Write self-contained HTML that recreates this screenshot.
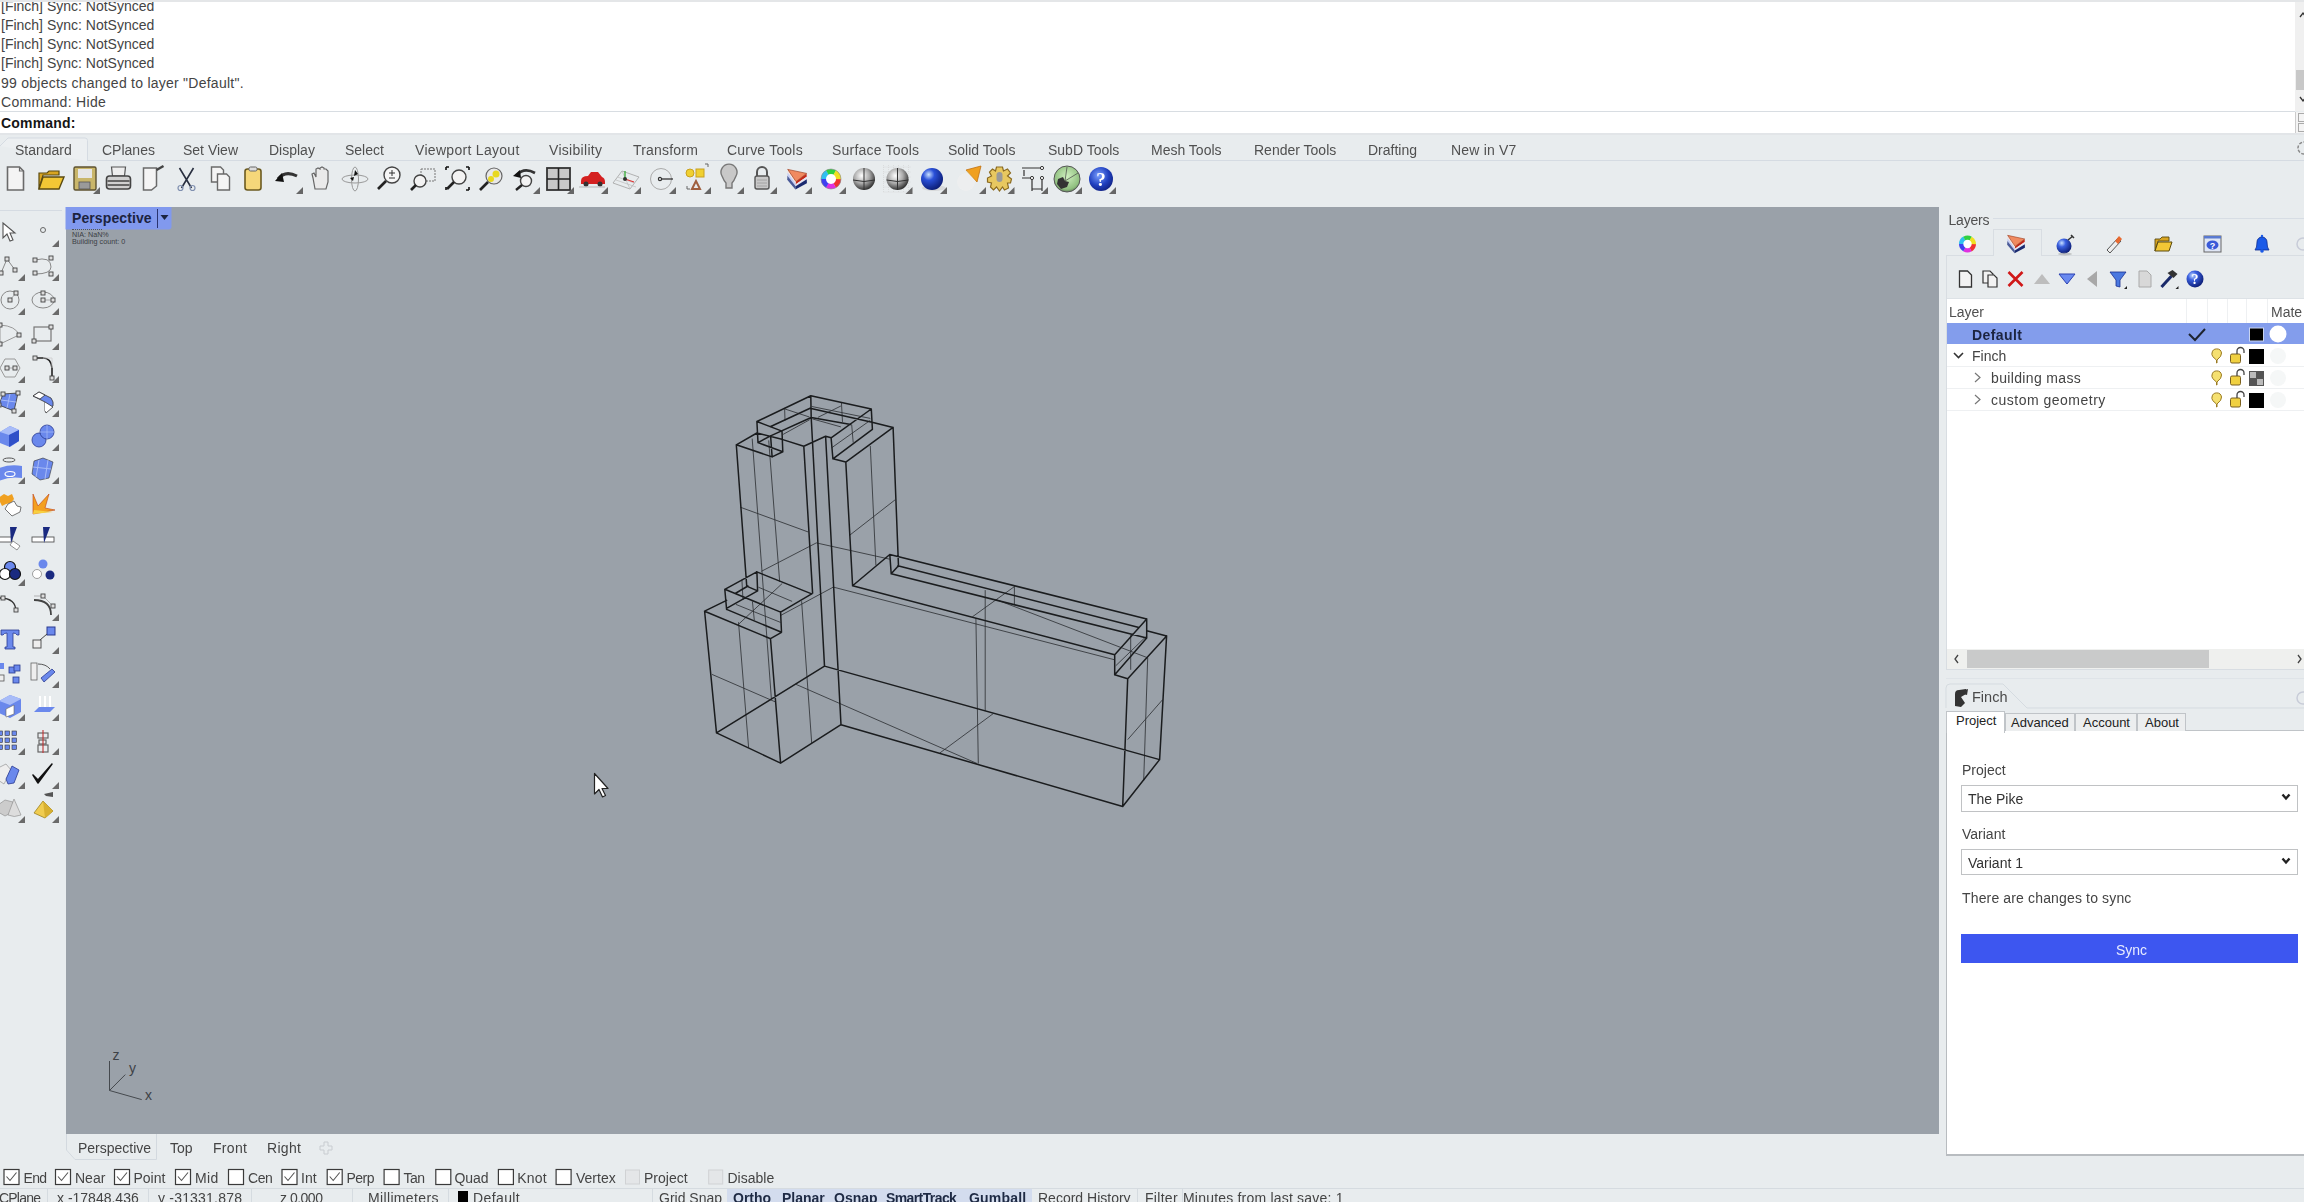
<!DOCTYPE html>
<html><head><meta charset="utf-8">
<style>
*{margin:0;padding:0;box-sizing:border-box}
html,body{width:2304px;height:1202px;overflow:hidden;background:#e8ecee;font-family:"Liberation Sans",sans-serif;font-size:14px;color:#3c3c3c;position:relative}
.a{position:absolute;white-space:nowrap}
#topstrip{left:0;top:0;width:2304px;height:2px;background:#e4e6e8}
#hist{left:0;top:2px;width:2295px;height:109px;background:#fff;overflow:hidden}
#hist div{position:absolute;left:1px;font-size:14px;color:#444;line-height:19px}
#vscroll{left:2295px;top:2px;width:9px;height:109px;background:#f0f0f0}
#cmd{left:0;top:111px;width:2295px;height:22px;background:#fff;border-top:1px solid #d8dde2}
.t{position:absolute;top:142px;font-size:14px;color:#505050}
#vp{left:66px;top:207px;width:1873px;height:927px;background:#9aa1a9}
.lbl{font-size:14px;color:#444}
#wrap{position:absolute;left:0;top:0;width:2304px;height:1202px;filter:blur(0.45px)}
</style></head><body><div id="wrap">
<div class="a" id="topstrip"></div>
<div class="a" id="hist">
<div style="top:-5px">[Finch] Sync: NotSynced</div>
<div style="top:14px">[Finch] Sync: NotSynced</div>
<div style="top:33px">[Finch] Sync: NotSynced</div>
<div style="top:52px">[Finch] Sync: NotSynced</div>
<div style="top:72px;letter-spacing:0.25px">99 objects changed to layer "Default".</div>
<div style="top:91px;letter-spacing:0.3px">Command: Hide</div>
</div>
<div class="a" id="vscroll"><div class="a" style="left:1px;top:68px;width:8px;height:20px;background:#c8c8c8"></div></div>
<div class="a" style="left:2295px;top:112px;width:9px;height:21px;background:#f4f4f4;border-left:1px solid #ccc"></div>
<div class="a" id="cmd"><span class="a" style="left:1px;top:3px;font-weight:bold;color:#151515;letter-spacing:0.2px">Command:</span></div>
<!-- tab row -->
<div class="a" style="left:88px;top:160px;width:2216px;height:1px;background:#d5dbe2"></div>
<div class="a" style="left:0;top:133px;width:2304px;height:2px;background:#e2e5e8"></div><svg class="a" style="left:0;top:135px" width="92" height="28" viewBox="0 135 92 28"><path d="M0 146L8 138H85Q87.5 138 87.5 140.5V161" fill="#eceff1" stroke="#d5dbe2" stroke-width="1"/></svg>
<span class="t" style="left:15px">Standard</span>
<span class="t" style="left:102px">CPlanes</span>
<span class="t" style="left:183px">Set View</span>
<span class="t" style="left:269px">Display</span>
<span class="t" style="left:345px">Select</span>
<span class="t" style="left:415px;letter-spacing:0.3px">Viewport Layout</span>
<span class="t" style="left:549px;letter-spacing:0.3px">Visibility</span>
<span class="t" style="left:633px;letter-spacing:0.2px">Transform</span>
<span class="t" style="left:727px;letter-spacing:0.2px">Curve Tools</span>
<span class="t" style="left:832px;letter-spacing:0.2px">Surface Tools</span>
<span class="t" style="left:948px">Solid Tools</span>
<span class="t" style="left:1048px">SubD Tools</span>
<span class="t" style="left:1151px">Mesh Tools</span>
<span class="t" style="left:1254px">Render Tools</span>
<span class="t" style="left:1368px">Drafting</span>
<span class="t" style="left:1451px;letter-spacing:0.2px">New in V7</span>
<svg class="a" style="left:2288px;top:0" width="16" height="240" viewBox="2288 0 16 240"><path d="M2300 17L2303 13L2306 17M2300 97L2303 101L2306 97" fill="none" stroke="#333" stroke-width="1.3"/><rect x="2298.5" y="113.5" width="8" height="8" fill="#f4f4f4" stroke="#aaa" stroke-width="1"/><rect x="2298.5" y="123.5" width="8" height="8" fill="#f4f4f4" stroke="#aaa" stroke-width="1"/><circle cx="2304" cy="148" r="6" fill="none" stroke="#888" stroke-width="1.5" stroke-dasharray="3 1.5"/></svg>
<svg class="a" style="left:0;top:155px" width="1130" height="48" viewBox="0 155 1130 48"><defs><radialGradient id="gs" cx="0.4" cy="0.35" r="0.7"><stop offset="0" stop-color="#fff"/><stop offset="0.5" stop-color="#aaa"/><stop offset="1" stop-color="#222"/></radialGradient><radialGradient id="bs" cx="0.35" cy="0.3" r="0.75"><stop offset="0" stop-color="#c8e0ff"/><stop offset="0.35" stop-color="#2a50d8"/><stop offset="1" stop-color="#0a1a70"/></radialGradient><radialGradient id="gl" cx="0.5" cy="0.4" r="0.7"><stop offset="0" stop-color="#d0f0c0"/><stop offset="0.7" stop-color="#90c080"/><stop offset="1" stop-color="#405040"/></radialGradient><radialGradient id="hs" cx="0.4" cy="0.35" r="0.7"><stop offset="0" stop-color="#7aa0ff"/><stop offset="0.6" stop-color="#2040c0"/><stop offset="1" stop-color="#102080"/></radialGradient></defs><g transform="translate(15.5,179)"><path d="M-8 -12H4L8 -8V11H-8Z" fill="#f4f4f4" stroke="#6a6a6a" stroke-width="1.6"/><path d="M4 -12V-8H8" fill="none" stroke="#6a6a6a" stroke-width="1.2"/></g><g transform="translate(51,179)"><path d="M-12 -6H-4L-2 -8H8V-4H-8L-12 10Z" fill="#d9a520" stroke="#5a4a10" stroke-width="1.2"/><path d="M-8 -2H13L8 10H-12Z" fill="#f2c735" stroke="#5a4a10" stroke-width="1.4"/></g><g transform="translate(85,179)"><rect x="-11" y="-12" width="22" height="23" rx="1.5" fill="#c9b66a" stroke="#5d5230" stroke-width="1.4"/><rect x="-7" y="-10" width="14" height="9" fill="#e6e6e6"/><rect x="-6" y="3" width="11" height="7" fill="#9a9a9a" stroke="#555" stroke-width="0.8"/></g><path d="M100 187L100 194L93 194Z" fill="#666"/><g transform="translate(118.5,179)"><path d="M-7 -12H7L6 -3H-6Z" fill="#eee" stroke="#555" stroke-width="1.2"/><rect x="-12" y="-3" width="24" height="13" rx="3" fill="#d0d0d0" stroke="#444" stroke-width="1.6"/><path d="M-11 2H11M-11 6H11" stroke="#444" stroke-width="1.3"/></g><g transform="translate(154.5,179)"><path d="M-11 -11H2V7L-3 11H-11Z" fill="#f4f4f4" stroke="#6a6a6a" stroke-width="1.5"/><path d="M2 -9L9 -13" stroke="#444" stroke-width="2.5"/></g><g transform="translate(186.5,179)"><path d="M-7 -11L5 9M7 -11L-5 9" stroke="#2a3040" stroke-width="1.6"/><circle cx="-6" cy="9" r="2.5" fill="none" stroke="#8090b0" stroke-width="1.2"/><circle cx="6" cy="9" r="2.5" fill="none" stroke="#8090b0" stroke-width="1.2"/></g><g transform="translate(220.5,179)"><path d="M-9 -12H0L3 -9V3H-9Z" fill="#f4f4f4" stroke="#6a6a6a" stroke-width="1.4"/><path d="M-3 -5H6L9 -2V11H-3Z" fill="#f4f4f4" stroke="#6a6a6a" stroke-width="1.4"/></g><g transform="translate(253,179)"><rect x="-8" y="-10" width="16" height="21" rx="2.5" fill="#f5d77a" stroke="#6b5a20" stroke-width="1.6"/><rect x="-4" y="-12" width="8" height="4" rx="1.5" fill="#ddd" stroke="#666" stroke-width="1"/></g><g transform="translate(288,179)"><path d="M-10 0Q-3 -9 9 -3" fill="none" stroke="#333" stroke-width="3"/><path d="M-13 2L-6 -6L-4 3Z" fill="#111"/></g><path d="M303 187L303 194L296 194Z" fill="#666"/><g transform="translate(321,179)"><path d="M-6 10L-8 -1L-9 -5L-7 -6L-5 -2L-5 -10L-3 -11L-1 -10V-11L1 -12L3 -11V-10L5 -10L7 -8V3L5 10Z" fill="#eaeaea" stroke="#666" stroke-width="1.2"/></g><g transform="translate(355,179)"><ellipse cx="0" cy="0" rx="13" ry="4" fill="none" stroke="#999" stroke-width="1"/><ellipse cx="0" cy="0" rx="3.5" ry="12" fill="none" stroke="#999" stroke-width="1"/><path d="M3 -5L0 -9L-1 -3Z M-5 -1L-2 2L-1 -2Z" fill="#111"/></g><g transform="translate(389,179)"><circle cx="3" cy="-4" r="8" fill="#f6f6f6" stroke="#444" stroke-width="1.4"/><path d="M-3 2L-11 10" stroke="#222" stroke-width="2.6"/><path d="M0 -6H6M3 -9V-3M0 -1H6" stroke="#333" stroke-width="1"/></g><g transform="translate(423,179)"><rect x="-2" y="-10" width="14" height="12" fill="none" stroke="#777" stroke-width="1" stroke-dasharray="2 1"/><circle cx="-3" cy="2" r="6" fill="#f3f3f3" stroke="#444" stroke-width="1.4"/><path d="M-7 6L-12 11" stroke="#222" stroke-width="2.6"/></g><g transform="translate(457,179)"><circle cx="2" cy="-2" r="7" fill="#f3f3f3" stroke="#444" stroke-width="1.4"/><path d="M-3 3L-10 10" stroke="#222" stroke-width="2.6"/><path d="M-11 -12H-8M-11 -12V-9M12 -12H9M12 -12V-9M12 11H9M12 11V8M-11 11V8" stroke="#111" stroke-width="1.6"/></g><g transform="translate(491,179)"><circle cx="3" cy="-3" r="8" fill="#e8e8e8" stroke="#666" stroke-width="1.2"/><circle cx="5" cy="-5" r="3.5" fill="#e8d820"/><circle cx="0" cy="0" r="3" fill="#e8d820"/><path d="M-3 3L-11 11" stroke="#222" stroke-width="2.6"/></g><g transform="translate(525,179)"><circle cx="1" cy="2" r="5.5" fill="#f3f3f3" stroke="#444" stroke-width="1.4"/><path d="M-3 6L-9 11" stroke="#222" stroke-width="2.4"/><path d="M-8 -4Q-1 -12 10 -6" fill="none" stroke="#333" stroke-width="2.6"/><path d="M-12 -3L-5 -9L-4 -1Z" fill="#111"/></g><path d="M540 187L540 194L533 194Z" fill="#666"/><g transform="translate(559,179)"><rect x="-12" y="-11" width="23" height="22" fill="#c8c8c8" stroke="#333" stroke-width="1.8"/><path d="M-0.5 -11V11M-12 0H11" stroke="#222" stroke-width="1.6"/></g><path d="M574 187L574 194L567 194Z" fill="#666"/><g transform="translate(593,179)"><path d="M-12 2Q-12 -3 -5 -3L-2 -7H5L9 -2Q12 -1 12 3V5H-12Z" fill="#d42020"/><circle cx="-7" cy="5" r="2.5" fill="#333"/><circle cx="7" cy="5" r="2.5" fill="#333"/><path d="M-14 8H12" stroke="#aaa" stroke-width="0.8"/></g><path d="M608 187L608 194L601 194Z" fill="#666"/><g transform="translate(626,179)"><path d="M-13 4L-4 -8L13 -2L4 10Z" fill="none" stroke="#aaa" stroke-width="0.9"/><path d="M-8.5 -2L8.5 4M-4 -8L4 10M-10 1L10 8" stroke="#bbb" stroke-width="0.7"/><path d="M-1 0L-1 -8" stroke="#3a3" stroke-width="1.3"/><path d="M-1 0L8 3" stroke="#d33" stroke-width="1.3"/><circle cx="-1" cy="0" r="2" fill="#333"/></g><path d="M641 187L641 194L634 194Z" fill="#666"/><g transform="translate(661,179)"><circle cx="0" cy="0" r="10.5" fill="none" stroke="#aaa" stroke-width="1"/><circle cx="-1" cy="0" r="1.6" fill="none" stroke="#333" stroke-width="1.2"/><path d="M0 0H12" stroke="#333" stroke-width="1.3"/></g><path d="M676 187L676 194L669 194Z" fill="#666"/><g transform="translate(696,179)"><circle cx="-6" cy="-6" r="4" fill="#f0d030" stroke="#c8a020" stroke-width="1"/><rect x="0" y="-10" width="8" height="8" fill="#f0d030" stroke="#c8a020" stroke-width="1"/><path d="M-4 10L0 2L4 10Z" fill="none" stroke="#a06040" stroke-width="2"/><path d="M9 -15H12V-12M-9 7V10H-6" stroke="#666" stroke-width="1" fill="none"/></g><path d="M711 187L711 194L704 194Z" fill="#666"/><g transform="translate(729,179)"><path d="M-7 -3A8 8 0 1 1 7 -3Q5 2 3 4V9H-3V4Q-5 2 -7 -3Z" fill="#c8c8c8" stroke="#777" stroke-width="1.4"/></g><path d="M744 187L744 194L737 194Z" fill="#666"/><g transform="translate(762,179)"><path d="M-5 -3V-7A5 5 0 0 1 5 -7V-3" fill="none" stroke="#555" stroke-width="2"/><rect x="-7" y="-3" width="14" height="13" rx="2" fill="#c8c8c8" stroke="#555" stroke-width="1.4"/><path d="M-5 1H5M-5 4H5M-5 7H5" stroke="#999" stroke-width="0.8"/></g><path d="M777 187L777 194L770 194Z" fill="#666"/><g transform="translate(797,179)"><path d="M-9.3 -9.6L-1 2.6L-1.18 4.94L-9.45 -6.48Z" fill="#f4e4e0"/><path d="M-9.45 -6.48L-1.18 4.94L-1.36 7.28L-9.6 -3.36Z" fill="#c4ccf4"/><path d="M-9.6 -3.36L-1.36 7.28L-1.6 10.4L-9.8 0.8Z" fill="#4a5a98"/><path d="M-1 2.6L9.6 -5.6L9.7 -2.17L-1.21 5.33Z" fill="#c42818"/><path d="M-1.21 5.33L9.7 -2.17L9.78 0.28L-1.36 7.28Z" fill="#e8e4f0"/><path d="M-1.36 7.28L9.78 0.28L9.9 4.2L-1.6 10.4Z" fill="#1a2a70"/><path d="M-9.3 -9.6L9.6 -5.6L-1 2.6Z" fill="#f08a60" stroke="#a04020" stroke-width="0.7"/></g><path d="M812 187L812 194L805 194Z" fill="#666"/><g transform="translate(831,179)"><path d="M0 0L10.00 0.00A10 10 0 0 1 4.85 8.75Z" fill="#f03030"/><path d="M0 0L5.00 8.66A10 10 0 0 1 -5.15 8.57Z" fill="#e030e0"/><path d="M0 0L-5.00 8.66A10 10 0 0 1 -10.00 -0.17Z" fill="#4040f0"/><path d="M0 0L-10.00 0.00A10 10 0 0 1 -4.85 -8.75Z" fill="#30c0f0"/><path d="M0 0L-5.00 -8.66A10 10 0 0 1 5.15 -8.57Z" fill="#30d040"/><path d="M0 0L5.00 -8.66A10 10 0 0 1 10.00 0.17Z" fill="#f0e020"/><circle cx="0" cy="0" r="5" fill="#fff"/><circle cx="0" cy="0" r="10" fill="none" stroke="#888" stroke-width="0.6"/></g><path d="M846 187L846 194L839 194Z" fill="#666"/><g transform="translate(864,179)"><circle r="11" fill="url(#gs)"/><path d="M0 -11V11M-11 1Q0 4 11 1" stroke="#333" stroke-width="1" fill="none"/></g><g transform="translate(897.5,179)"><path d="M-14 -14V14M-9 -14V14M-4 -14V14M1 -14V14M6 -14V14M11 -14V14M-14 -12H14M-14 -7H14M-14 -2H14M-14 3H14M-14 8H14M-14 13H14" stroke="#ccc" stroke-width="0.5" stroke-dasharray="1 1"/><circle r="11" fill="url(#gs)"/><path d="M0 -11V11M-11 1Q0 4 11 1" stroke="#333" stroke-width="1" fill="none"/></g><path d="M912.5 187L912.5 194L905.5 194Z" fill="#666"/><g transform="translate(932,179)"><ellipse cx="2" cy="9" rx="12" ry="3" fill="#ccc" opacity="0.6"/><circle r="11" fill="url(#bs)"/></g><path d="M947 187L947 194L940 194Z" fill="#666"/><g transform="translate(971,179)"><circle cx="-5" cy="3" r="9" fill="#f0f0f0" opacity="0.7"/><path d="M-5 -9L10 -13L6 3Z" fill="#f0a020" stroke="#c07010" stroke-width="0.8"/><path d="M-5 -9L6 3L-3 -6Z" fill="#f6e090"/></g><path d="M986 187L986 194L979 194Z" fill="#666"/><g transform="translate(999.5,179)"><path d="M-3 -12H3L4 -8L8 -10L11 -6L8 -3L12 0L11 4L8 4L9 9L5 11L3 8L0 12L-3 8L-6 11L-9 8L-8 4L-12 3L-12 -1L-8 -3L-10 -7L-7 -10L-4 -8Z" fill="#e8c860" stroke="#8a6a20" stroke-width="1.2"/><rect x="-3" y="-7" width="6" height="10" rx="3" fill="#999"/></g><path d="M1014.5 187L1014.5 194L1007.5 194Z" fill="#666"/><g transform="translate(1033,179)"><path d="M-11 -11H9M-11 -1H-1V12M9 -1V12M-9 -9V-3M-1 10H9" stroke="#333" stroke-width="1.2" fill="none"/><circle cx="9" cy="-11" r="1.6" fill="#fff" stroke="#333"/><circle cx="-1" cy="-1" r="1.6" fill="#fff" stroke="#333"/><circle cx="9" cy="-1" r="1.6" fill="#fff" stroke="#333"/></g><path d="M1048 187L1048 194L1041 194Z" fill="#666"/><g transform="translate(1067,179)"><circle r="13" fill="url(#gl)" stroke="#555" stroke-width="1"/><path d="M-9 0L-4 -2L-2 2L2 3L0 8L-6 10L-10 5Z" fill="#333"/><path d="M0 -12L-2 2M-2 2L11 -6" stroke="#444" stroke-width="0.7"/></g><path d="M1082 187L1082 194L1075 194Z" fill="#666"/><g transform="translate(1101,179)"><circle r="12" fill="url(#hs)"/><text x="0" y="7" font-family="Liberation Serif" font-weight="bold" font-size="19" fill="#fff" text-anchor="middle">?</text></g><path d="M1116 187L1116 194L1109 194Z" fill="#666"/></svg>
<div class="a" style="left:0;top:210px;width:62px;height:1px;background:#d5dbe2"></div>
<svg class="a" style="left:0;top:205px" width="64" height="630" viewBox="0 205 64 630"><g transform="translate(10,232)"><path d="M-7 -9L-7 6L-3 2L0 9L3 8L0 1L5 1Z" fill="#fff" stroke="#555" stroke-width="1.1"/></g><g transform="translate(43,232)"><circle cx="0" cy="-2" r="2.5" fill="none" stroke="#666" stroke-width="1"/></g><path d="M59 240V247H52Z" fill="#6a6a6a"/><g transform="translate(10,266)"><path d="M-9 7L-3 -7L5 4" fill="none" stroke="#888" stroke-width="1"/><rect x="-11" y="5" width="4" height="4" fill="#ddd" stroke="#444" stroke-width="0.9"/><rect x="-5" y="-9" width="4" height="4" fill="#ddd" stroke="#444" stroke-width="0.9"/><rect x="3" y="2" width="4" height="4" fill="#ddd" stroke="#444" stroke-width="0.9"/></g><path d="M25 274V281H18Z" fill="#6a6a6a"/><g transform="translate(43,266)"><path d="M-8 -6Q8 -10 8 1Q8 8 -8 8" fill="none" stroke="#888" stroke-width="1"/><rect x="-10" y="-8" width="4" height="4" fill="#ddd" stroke="#444" stroke-width="0.9"/><rect x="6" y="-10" width="4" height="4" fill="#ddd" stroke="#444" stroke-width="0.9"/><rect x="-10" y="5" width="4" height="4" fill="#ddd" stroke="#444" stroke-width="0.9"/><rect x="6" y="6" width="4" height="4" fill="#ddd" stroke="#444" stroke-width="0.9"/></g><path d="M59 274V281H52Z" fill="#6a6a6a"/><g transform="translate(10,300)"><circle r="9" fill="none" stroke="#888" stroke-width="1"/><path d="M0 0L6 -7" stroke="#999" stroke-width="0.8"/><rect x="-2" y="-2" width="4" height="4" fill="#ddd" stroke="#444" stroke-width="0.9"/><rect x="4" y="-9" width="4" height="4" fill="#ddd" stroke="#444" stroke-width="0.9"/></g><path d="M25 308V315H18Z" fill="#6a6a6a"/><g transform="translate(43,300)"><ellipse rx="11" ry="8" fill="none" stroke="#888" stroke-width="1"/><path d="M0 0H10" stroke="#999" stroke-width="0.8"/><rect x="-2" y="-9" width="4" height="4" fill="#ddd" stroke="#444" stroke-width="0.9"/><rect x="-2" y="-2" width="4" height="4" fill="#ddd" stroke="#444" stroke-width="0.9"/><rect x="8" y="-2" width="4" height="4" fill="#ddd" stroke="#444" stroke-width="0.9"/></g><path d="M59 308V315H52Z" fill="#6a6a6a"/><g transform="translate(10,335)"><path d="M-10 -10Q6 -9 9 0L-10 9Z" fill="none" stroke="#999" stroke-width="1"/><rect x="-12" y="-12" width="4" height="4" fill="#ddd" stroke="#444" stroke-width="0.9"/><rect x="7" y="-2" width="4" height="4" fill="#ddd" stroke="#444" stroke-width="0.9"/><rect x="-12" y="7" width="4" height="4" fill="#ddd" stroke="#444" stroke-width="0.9"/></g><path d="M25 343V350H18Z" fill="#6a6a6a"/><g transform="translate(43,335)"><rect x="-9" y="-8" width="17" height="14" fill="none" stroke="#777" stroke-width="1.2"/><rect x="6" y="-10" width="4" height="4" fill="#ddd" stroke="#444" stroke-width="0.9"/><rect x="-11" y="4" width="4" height="4" fill="#ddd" stroke="#444" stroke-width="0.9"/></g><path d="M59 343V350H52Z" fill="#6a6a6a"/><g transform="translate(10,368)"><path d="M-5 -9H5L10 0L5 9H-5L-10 0Z" fill="none" stroke="#999" stroke-width="1"/><path d="M-3 0H5" stroke="#999" stroke-width="0.8"/><rect x="-5" y="-2" width="4" height="4" fill="#ddd" stroke="#444" stroke-width="0.9"/><rect x="3" y="-2" width="4" height="4" fill="#ddd" stroke="#444" stroke-width="0.9"/></g><path d="M25 376V383H18Z" fill="#6a6a6a"/><g transform="translate(43,368)"><path d="M-8 -10H0Q8 -10 9 0V10" fill="none" stroke="#222" stroke-width="1.6"/><path d="M0 -10H9V0" fill="none" stroke="#ccc" stroke-width="0.8"/><rect x="-10" y="-12" width="4" height="4" fill="#ddd" stroke="#444" stroke-width="0.9"/><rect x="7" y="8" width="4" height="4" fill="#ddd" stroke="#444" stroke-width="0.9"/></g><path d="M59 376V383H52Z" fill="#6a6a6a"/><g transform="translate(10,402)"><path d="M-7 -8L8 -9L4 9L-11 3Z" fill="#6a88ec" stroke="#333" stroke-width="0.8"/><path d="M0 -8L-3 6M-9 -2L6 0" stroke="#a8bcf8" stroke-width="1"/><rect x="-9" y="-10" width="4" height="4" fill="#ddd" stroke="#444" stroke-width="0.9"/><rect x="6" y="-11" width="4" height="4" fill="#ddd" stroke="#444" stroke-width="0.9"/><rect x="2" y="7" width="4" height="4" fill="#ddd" stroke="#444" stroke-width="0.9"/><rect x="-13" y="1" width="4" height="4" fill="#ddd" stroke="#444" stroke-width="0.9"/></g><path d="M25 410V417H18Z" fill="#6a6a6a"/><g transform="translate(43,402)"><path d="M-10 -6L-4 -10L8 -4Q11 0 10 4L2 9V0Z" fill="#6a88ec" stroke="#333" stroke-width="0.8"/><path d="M-10 -6L-4 -10L2 -7L-3 -3Z" fill="#fff" stroke="#333" stroke-width="0.8"/><path d="M2 0L10 5L3 11L2 9" fill="#fff" stroke="#333" stroke-width="0.8"/></g><path d="M59 410V417H52Z" fill="#6a6a6a"/><g transform="translate(10,436)"><path d="M-10 -4L0 -10L9 -6V5L0 11L-10 7Z" fill="#6a88ec"/><path d="M-10 -4L0 -10L9 -6L-1 -1Z" fill="#a8bcf8"/><path d="M-1 -1V11L9 5V-6Z" fill="#3050c8"/></g><path d="M25 444V451H18Z" fill="#6a6a6a"/><g transform="translate(43,436)"><circle cx="-4" cy="4" r="7" fill="#6a88ec" stroke="#2a3a90" stroke-width="0.8"/><circle cx="4" cy="-4" r="7" fill="#6a88ec" stroke="#2a3a90" stroke-width="0.8"/><path d="M4 -11V3M-3 -4H11" stroke="#a8bcf8" stroke-width="0.7"/></g><path d="M59 444V451H52Z" fill="#6a6a6a"/><g transform="translate(10,469)"><ellipse cx="-1" cy="-9" rx="6" ry="2" fill="none" stroke="#555" stroke-width="1"/><path d="M-11 -1Q0 -5 12 -3V9Q0 7 -11 12Z" fill="#6a88ec"/><ellipse cx="0" cy="5" rx="5" ry="2.5" fill="none" stroke="#fff" stroke-width="1.2"/></g><path d="M25 477V484H18Z" fill="#6a6a6a"/><g transform="translate(43,469)"><path d="M-9 -8L0 -11L10 -7L6 9L-3 11L-11 5Z" fill="#6a88ec" stroke="#333" stroke-width="0.6"/><path d="M-4 -9L-7 8M5 -9L2 10M-10 -2L8 0" stroke="#a8bcf8" stroke-width="1"/></g><path d="M59 477V484H52Z" fill="#6a6a6a"/><g transform="translate(10,504)"><path d="M-12 -6L-6 -10L-2 -8L2 -10L4 -5L1 -1L-4 0L-8 2Z" fill="#f0a020"/><path d="M-2 0L4 -3L7 2L11 3L10 8L6 10L2 12L-2 8L-5 5Z" fill="#fff" stroke="#666" stroke-width="0.9"/></g><g transform="translate(43,504)"><path d="M-10 -10L-5 2L6 -10L2 4L12 6L-10 10Z" fill="#f3a020" stroke="#c04010" stroke-width="0.6"/><path d="M-9 6L10 8L-10 10Z" fill="#f8d040"/></g><g transform="translate(10,536)"><rect x="-12" y="1" width="14" height="5" fill="#fff" stroke="#555" stroke-width="0.9"/><path d="M0 -9H7L1 7Z" fill="#1a2a80"/><path d="M3 5L10 10L7 14L0 9Z" fill="#fff" stroke="#777" stroke-width="0.8"/></g><g transform="translate(43,536)"><rect x="-11" y="1" width="22" height="5" fill="#fff" stroke="#555" stroke-width="0.9"/><path d="M0 -9H7L1 7Z" fill="#1a2a80"/></g><g transform="translate(10,571)"><circle cx="0" cy="-4" r="5.5" fill="#6a88ec" stroke="#111" stroke-width="1.2"/><circle cx="-5" cy="3" r="5.5" fill="#fff" stroke="#111" stroke-width="1.2"/><circle cx="5" cy="3" r="5.5" fill="#1a2a80" stroke="#111" stroke-width="1.2"/></g><path d="M25 579V586H18Z" fill="#6a6a6a"/><g transform="translate(43,571)"><circle cx="0" cy="-7" r="4.5" fill="#6a88ec"/><circle cx="-6" cy="3" r="4.5" fill="#fff" stroke="#888" stroke-width="0.8"/><circle cx="7" cy="4" r="4.5" fill="#1a2a80"/></g><g transform="translate(10,606)"><path d="M-10 -8Q6 -8 6 6" fill="none" stroke="#333" stroke-width="1.3"/><rect x="-9" y="-10" width="4" height="4" fill="#ddd" stroke="#444" stroke-width="0.9"/><rect x="4" y="2" width="4" height="4" fill="#ddd" stroke="#444" stroke-width="0.9"/></g><g transform="translate(43,606)"><path d="M-9 -6Q8 -6 8 9" fill="none" stroke="#444" stroke-width="1.8"/><path d="M-9 -10H-2M0 -10L10 0" stroke="#999" stroke-width="0.7"/><rect x="-2" y="-12" width="4" height="4" fill="#ddd" stroke="#444" stroke-width="0.9"/><rect x="8" y="-2" width="4" height="4" fill="#ddd" stroke="#444" stroke-width="0.9"/></g><path d="M59 614V621H52Z" fill="#6a6a6a"/><g transform="translate(10,639)"><path d="M-9 -9H9V-4H7Q6 -6 3 -6V8H5V10H-5V8H-3V-6Q-6 -6 -7 -4H-9Z" fill="#6a88ec" stroke="#2a3a90" stroke-width="0.8"/></g><g transform="translate(43,639)"><rect x="-10" y="1" width="8" height="8" fill="#eee" stroke="#555" stroke-width="1"/><rect x="4" y="-12" width="8" height="8" fill="#6a88ec" stroke="#2a3a90" stroke-width="1"/><path d="M-3 1L4 -5" stroke="#444" stroke-width="1"/></g><path d="M59 647V654H52Z" fill="#6a6a6a"/><g transform="translate(10,673)"><rect x="-12" y="-10" width="6" height="6" fill="#6a88ec"/><rect x="-12" y="2" width="6" height="6" fill="#eee" stroke="#555" stroke-width="0.8"/><rect x="-1" y="-6" width="6" height="6" fill="#6a88ec" stroke="#2a3a90" stroke-width="0.8"/><rect x="4" y="-8" width="6" height="6" fill="#6a88ec" stroke="#2a3a90" stroke-width="0.8"/><rect x="3" y="4" width="6" height="6" fill="#6a88ec" stroke="#2a3a90" stroke-width="0.8"/></g><g transform="translate(43,673)"><rect x="-12" y="-10" width="6" height="17" fill="#eee" stroke="#666" stroke-width="0.8"/><path d="M-2 5L9 -4L12 -1L1 9Z" fill="#6a88ec" stroke="#2a3a90" stroke-width="0.8"/><path d="M-5 -9Q3 -9 7 -4" fill="none" stroke="#333" stroke-width="0.8"/></g><path d="M59 681V688H52Z" fill="#6a6a6a"/><g transform="translate(10,706)"><path d="M-11 -5L0 -11L11 -7V6L0 12L-11 7Z" fill="#6a88ec"/><path d="M-11 -5L0 -11L11 -7L0 -1Z" fill="#a8bcf8"/><path d="M-4 3L4 -1V8L-4 11Z" fill="#fff" stroke="#666" stroke-width="0.6"/></g><path d="M25 714V721H18Z" fill="#6a6a6a"/><g transform="translate(43,706)"><path d="M-9 6L-4 1H12L7 6Z" fill="#6a88ec"/><path d="M-3 1V-10M2 1V-10M7 1V-10" stroke="#fff" stroke-width="2"/></g><path d="M59 714V721H52Z" fill="#6a6a6a"/><g transform="translate(10,740)"><rect x="-12" y="-9" width="4.5" height="4.5" fill="#6a88ec" stroke="#333" stroke-width="0.6"/><rect x="-12" y="-2" width="4.5" height="4.5" fill="#6a88ec" stroke="#333" stroke-width="0.6"/><rect x="-12" y="5" width="4.5" height="4.5" fill="#6a88ec" stroke="#333" stroke-width="0.6"/><rect x="-5" y="-9" width="4.5" height="4.5" fill="#6a88ec" stroke="#333" stroke-width="0.6"/><rect x="-5" y="-2" width="4.5" height="4.5" fill="#6a88ec" stroke="#333" stroke-width="0.6"/><rect x="-5" y="5" width="4.5" height="4.5" fill="#6a88ec" stroke="#333" stroke-width="0.6"/><rect x="2" y="-9" width="4.5" height="4.5" fill="#6a88ec" stroke="#333" stroke-width="0.6"/><rect x="2" y="-2" width="4.5" height="4.5" fill="#6a88ec" stroke="#333" stroke-width="0.6"/><rect x="2" y="5" width="4.5" height="4.5" fill="#6a88ec" stroke="#333" stroke-width="0.6"/></g><path d="M25 748V755H18Z" fill="#6a6a6a"/><g transform="translate(43,740)"><rect x="-5" y="-7" width="10" height="5" fill="none" stroke="#666" stroke-width="1.2"/><rect x="-4" y="0" width="7" height="4" fill="none" stroke="#666" stroke-width="1.2"/><rect x="-5" y="5" width="10" height="7" fill="none" stroke="#666" stroke-width="1.2"/><path d="M0 -10V13" stroke="#c03030" stroke-width="1.1"/></g><path d="M59 748V755H52Z" fill="#6a6a6a"/><g transform="translate(10,774)"><path d="M-12 -6L-4 -10L1 -4L-6 10L-12 6Z" fill="#eee" stroke="#888" stroke-width="0.6"/><path d="M-4 5L2 -8L9 -4L4 9L-2 10Z" fill="#6a88ec" stroke="#2a3a90" stroke-width="0.8"/></g><path d="M25 782V789H18Z" fill="#6a6a6a"/><g transform="translate(43,774)"><path d="M-10 1L-5 6L9 -10L-5 9Z" fill="#111" stroke="#111" stroke-width="1.5" stroke-linejoin="round"/></g><path d="M59 782V789H52Z" fill="#6a6a6a"/><g transform="translate(10,808)"><path d="M-12 -3L-5 -8L3 -6V4L-5 8L-12 4Z" fill="#ccc" stroke="#888" stroke-width="0.6"/><path d="M4 -9L11 7Q4 10 -2 7Z" fill="#ddd" stroke="#888" stroke-width="0.6"/></g><path d="M25 816V823H18Z" fill="#6a6a6a"/><g transform="translate(43,808)"><path d="M0 -7L-9 5L2 10L10 3Z" fill="#f0cc50" stroke="#9a8020" stroke-width="0.8"/><path d="M0 -7L2 10L10 3Z" fill="#d8b030"/><path d="M1 -14L10 -16V-11L3 -12Z" fill="#555"/></g><path d="M59 816V823H52Z" fill="#6a6a6a"/></svg>
<div class="a" id="vp"></div>
<svg class="a" style="left:0;top:0" width="2304" height="1202" viewBox="0 0 2304 1202"><path d="M752.2 438.6L771.4 699.1M768.7 440.4L779.7 582.0M740.3 507.2L808.0 531.9M870.3 445.9L875.9 565.2M849.2 535.6L895.0 499.9M761.4 571.3L816.3 542.9M816.3 542.9L889.8 559.2M738.5 622.2L748.6 747.6M801.6 601.2L811.7 743.0M712.0 674.4L775.1 701.8M796.1 684.4L977.1 763.5M939.8 753.0L993.4 713.5M975.9 618.0L978.3 763.5M985.2 590.1L985.2 711.1M972.4 616.8L1014.4 586.6M1014.4 585.4L1014.4 605.2M995.7 599.4L1147.7 657.8M1147.7 657.8L1143.7 780.6M1127.7 739.6L1162.6 699.7M1115.7 665.8L1145.7 636.9M1130.7 634.9L1130.7 669.8M833.3 587.1L1114.7 659.8M780.0 615.8L833.3 587.1M741.9 579.7L743.0 600.0M752.4 601.4L754.3 620.1M735.9 604.4L780.5 622.4M738.2 624.6L782.3 583.4M758.4 587.2L792.1 601.4M784.6 407.9L785.0 420.4M841.4 402.0L842.5 421.9M851.7 424.8L853.2 442.6M785.0 409.0L809.4 417.0M811.9 406.5L870.3 418.4M817.9 417.4L840.9 406.0M812.4 418.9L840.9 426.9M783.1 434.4L809.7 419.7M831.8 447.7L870.2 420.4" stroke="#2a2d31" stroke-width="1" fill="none" opacity="0.8"/><path d="M756.9 421.5L810.8 395.7M810.8 395.7L871.3 409.0M756.9 421.5L758.0 442.6M871.3 409.0L872.4 429.3M810.8 395.7L811.2 417.5M756.9 421.5L782.0 431.1M770.2 426.7L810.1 408.2M810.1 408.2L872.0 422.3M811.2 417.5L850.8 424.4M757.0 433.0L782.8 439.6M782.0 431.1L782.8 451.8M871.3 409.0L831.1 437.8M831.1 437.8L832.9 458.8M832.9 458.8L845.8 462.1M845.8 462.1L893.1 427.4M872.0 422.3L893.1 427.4M872.4 429.3L832.9 458.8M736.3 444.8L772.1 456.9M736.3 444.8L756.9 433.0M772.1 456.9L782.8 451.8M782.8 439.6L803.8 446.2M803.8 446.2L825.6 436.3M825.6 436.3L831.1 437.8M758.0 442.6L782.8 451.8M758.0 442.6L770.6 435.9M770.6 435.9L811.2 417.5M770.6 435.9L772.1 456.9M736.3 444.8L746.7 585.6M803.8 446.2L812.6 593.1M811.2 417.5L824.5 666.1M825.6 436.3L841.0 724.7M845.8 462.1L852.6 585.8M893.1 427.4L898.5 566.5M724.8 589.3L756.8 571.9M756.8 571.9L811.7 593.9M811.7 593.9L780.6 612.1M724.8 589.3L726.6 609.4M780.6 612.1L781.5 632.3M724.8 589.3L780.6 612.1M726.6 609.4L781.5 632.3M704.6 611.2L770.5 638.7M770.5 638.7L781.5 632.3M704.6 611.2L716.5 732.9M770.5 638.7L780.6 763.1M716.5 732.9L780.6 763.1M780.6 763.1L841.0 724.7M716.5 732.9L824.5 666.1M824.5 666.1L1159.6 759.6M841.0 724.7L1122.7 806.5M1122.7 806.5L1159.6 759.6M1166.6 635.9L1159.6 759.6M1127.7 678.8L1122.7 806.5M704.6 611.2L726.6 600.3M727.0 608.1L757.6 590.9M747.2 586.4L757.6 590.9M757.6 590.9L756.9 571.8M735.2 593.5L747.9 586.0M889.8 554.5L1146.7 618.9M889.8 554.5L891.2 573.8M891.2 573.8L1146.7 637.9M897.8 565.8L1139.0 627.4M1114.7 674.8L1146.7 637.9M891.2 573.8L898.0 566.3M852.6 585.8L889.8 554.5M852.6 585.8L1114.7 654.8M1146.7 618.9L1146.7 637.9M1146.7 618.9L1114.7 654.8M1114.7 654.8L1114.7 674.8M1114.7 674.8L1127.7 678.8M1127.7 678.8L1166.6 635.9M1147.7 630.9L1166.6 635.9" stroke="#1a1c1e" stroke-width="1.5" fill="none" stroke-linecap="round"/></svg>
<svg class="a" style="left:60px;top:200px" width="120" height="60" viewBox="60 200 120 60"><path d="M65.5 207H171.5V226.5Q171.5 229.5 168.5 229.5H65.5Z" fill="#8199ee"/><path d="M157.5 209V228" stroke="#2a3470" stroke-width="1"/><path d="M160.5 215H168.5L164.5 220Z" fill="#1c2440"/></svg><span class="a" style="left:72px;top:210px;font-size:14px;font-weight:bold;color:#1c2340;letter-spacing:0.1px">Perspective</span><div class="a" style="left:72px;top:231px;font-size:7.2px;line-height:7.4px;color:#3a3e44">NIA: NaN%<br>Building count: 0</div><div class="a" style="left:72px;top:228.5px;width:30px;height:1px;border-top:1px dotted #50555c"></div><svg class="a" style="left:100px;top:1045px" width="60" height="60" viewBox="100 1045 60 60"><path d="M109.5 1061V1090.5L125.3 1074.6M109.5 1090.5L141.7 1099.6" fill="none" stroke="#45494e" stroke-width="1"/></svg><span class="a" style="left:112.5px;top:1047px;font-size:14px;color:#3e4247">z</span><span class="a" style="left:129px;top:1060px;font-size:14px;color:#3e4247">y</span><span class="a" style="left:145px;top:1087px;font-size:14px;color:#3e4247">x</span><svg class="a" style="left:590px;top:770px" width="24" height="30" viewBox="590 770 24 30"><path d="M594.5 773.5V794L599 789.5L602.5 797L605.5 795.5L602 788.5H608Z" fill="#fff" stroke="#222" stroke-width="1.2" stroke-linejoin="round"/></svg>
<div class="a" style="left:1993px;top:218px;width:311px;height:1px;background:#d7dde4"></div><span class="a" style="left:1948.5px;top:211.5px;font-size:14px;color:#505050;letter-spacing:-0.2px">Layers</span><div class="a" style="left:1946px;top:255px;width:358px;height:415px;border:1px solid #d8dde2;border-right:none;background:#e8ecee"></div><div class="a" style="left:1993px;top:229px;width:49px;height:27px;border:1px solid #d8dde2;border-bottom:none;background:#e8ecee"></div><div class="a" style="left:1947px;top:299px;width:357px;height:350px;background:#fff"></div><div class="a" style="left:1947px;top:298px;width:357px;height:1px;background:#dde2e6"></div><div class="a" style="left:2186px;top:299px;width:1px;height:24px;background:#eef0f2"></div><div class="a" style="left:2207px;top:299px;width:1px;height:24px;background:#eef0f2"></div><div class="a" style="left:2227px;top:299px;width:1px;height:24px;background:#eef0f2"></div><div class="a" style="left:2246px;top:299px;width:1px;height:24px;background:#eef0f2"></div><div class="a" style="left:2267px;top:299px;width:1px;height:24px;background:#eef0f2"></div><span class="a" style="left:1949px;top:304px;font-size:14px;color:#505050">Layer</span><span class="a" style="left:2271px;top:304px;font-size:14px;color:#505050">Mate</span><div class="a" style="left:1947px;top:323px;width:357px;height:21px;background:#839dec"></div><span class="a" style="left:1972px;top:327px;font-size:14px;font-weight:bold;color:#1c2440;letter-spacing:0.4px">Default</span><div class="a" style="left:1947px;top:366px;width:357px;height:1px;background:#eef0f2"></div><div class="a" style="left:1947px;top:388px;width:357px;height:1px;background:#eef0f2"></div><div class="a" style="left:1947px;top:410px;width:357px;height:1px;background:#eef0f2"></div><span class="a" style="left:1972px;top:348px;font-size:14px;color:#444">Finch</span><span class="a" style="left:1991px;top:370px;font-size:14px;color:#444;letter-spacing:0.35px">building mass</span><span class="a" style="left:1991px;top:392px;font-size:14px;color:#444;letter-spacing:0.5px">custom geometry</span><div class="a" style="left:1947px;top:649px;width:357px;height:20px;background:#eff0ee"></div><div class="a" style="left:1967px;top:650px;width:242px;height:18px;background:#c9caca"></div><svg class="a" style="left:1940px;top:225px" width="364" height="450" viewBox="1940 225 364 450"><defs><radialGradient id="rbs" cx="0.35" cy="0.3" r="0.75"><stop offset="0" stop-color="#c8e0ff"/><stop offset="0.35" stop-color="#3a60e0"/><stop offset="1" stop-color="#0a1a70"/></radialGradient></defs><path d="M1967.5 244L1976.00 244.00A8.5 8.5 0 0 1 1971.62 251.43Z" fill="#f03030"/><path d="M1967.5 244L1971.75 251.36A8.5 8.5 0 0 1 1963.12 251.29Z" fill="#e030e0"/><path d="M1967.5 244L1963.25 251.36A8.5 8.5 0 0 1 1959.00 243.85Z" fill="#4040f0"/><path d="M1967.5 244L1959.00 244.00A8.5 8.5 0 0 1 1963.38 236.57Z" fill="#30c0f0"/><path d="M1967.5 244L1963.25 236.64A8.5 8.5 0 0 1 1971.88 236.71Z" fill="#30d040"/><path d="M1967.5 244L1971.75 236.64A8.5 8.5 0 0 1 1976.00 244.15Z" fill="#f0e020"/><circle cx="1967.5" cy="244" r="4.2" fill="#fff"/><g transform="translate(2016,244) scale(0.9)"><path d="M-9.3 -9.6L-1 2.6L-1.18 4.94L-9.45 -6.48Z" fill="#f4e4e0"/><path d="M-9.45 -6.48L-1.18 4.94L-1.36 7.28L-9.6 -3.36Z" fill="#c4ccf4"/><path d="M-9.6 -3.36L-1.36 7.28L-1.6 10.4L-9.8 0.8Z" fill="#4a5a98"/><path d="M-1 2.6L9.6 -5.6L9.7 -2.17L-1.21 5.33Z" fill="#c42818"/><path d="M-1.21 5.33L9.7 -2.17L9.78 0.28L-1.36 7.28Z" fill="#e8e4f0"/><path d="M-1.36 7.28L9.78 0.28L9.9 4.2L-1.6 10.4Z" fill="#1a2a70"/><path d="M-9.3 -9.6L9.6 -5.6L-1 2.6Z" fill="#f08a60" stroke="#a04020" stroke-width="0.7"/></g><g transform="translate(2065,244)"><circle cx="-1" cy="2" r="7.5" fill="url(#rbs)"/><path d="M3 -4L8 -8M6 -9L9 -6" stroke="#333" stroke-width="1.5"/><ellipse cx="0" cy="10" rx="7" ry="1.5" fill="#999" opacity="0.5"/></g><g transform="translate(2114,244)"><path d="M-7 6L4 -6L7 -3L-4 9Z" fill="#eee" stroke="#555" stroke-width="1"/><path d="M1 -3L5 -8L8 -5L4 0Z" fill="#e86a30"/></g><g transform="translate(2163,244)"><path d="M-8 -5H-3L-1 -7H6V-3H-5L-8 7Z" fill="#d9a520" stroke="#5a4a10" stroke-width="0.9"/><path d="M-5 -2H9L6 7H-8Z" fill="#f2c735" stroke="#5a4a10" stroke-width="1"/></g><g transform="translate(2212,244)"><rect x="-8" y="-8" width="17" height="16" fill="#dfe6f5" stroke="#666" stroke-width="1"/><rect x="-8" y="-8" width="17" height="2.5" fill="#5a7ad0"/><ellipse cx="0.5" cy="1" rx="6" ry="4.5" fill="#3a5ad8"/><text x="0.5" y="4.5" font-size="9" font-weight="bold" fill="#fff" text-anchor="middle">?</text></g><g transform="translate(2262,244)"><path d="M-7 6Q-5 4 -5 -2A5 5 0 0 1 5 -2Q5 4 7 6Z" fill="#1a5ae8" stroke="#0a2a90" stroke-width="0.8"/><circle cx="0" cy="7" r="1.8" fill="#1a5ae8"/><circle cx="0" cy="-8" r="1.2" fill="#1a5ae8"/></g><circle cx="2303" cy="244" r="6" fill="none" stroke="#c8ccd8" stroke-width="1.5"/><g transform="translate(1965.5,279)"><path d="M-6 -8H2L6 -4V8H-6Z" fill="#f2f2f2" stroke="#333" stroke-width="1.3"/></g><g transform="translate(1990,279)"><path d="M-7 -8H0L3 -5V4H-7Z" fill="#f2f2f2" stroke="#333" stroke-width="1.2"/><path d="M-2 -4H4L7 -1V8H-2Z" fill="#f2f2f2" stroke="#333" stroke-width="1.2"/></g><g transform="translate(2015.5,279)"><path d="M-7 -7L7 7M7 -7L-7 7" stroke="#d01818" stroke-width="2.6"/></g><g transform="translate(2042,279)"><path d="M-8 5L0 -5L8 5Z" fill="#bdbdbd"/></g><g transform="translate(2067,279)"><path d="M-8 -5H8L0 5Z" fill="#6a8af0" stroke="#2a40b0" stroke-width="1"/></g><g transform="translate(2092,279)"><path d="M5 -8V8L-5 0Z" fill="#a8a8a8"/></g><g transform="translate(2118,279)"><path d="M-8 -7H8L2 1V8L-2 7V1Z" fill="#4a78e0" stroke="#1a3090" stroke-width="0.8"/><path d="M9 7V10H6Z" fill="#222"/></g><g transform="translate(2145,279)"><path d="M-6 -8H2L6 -4V8H-6Z" fill="#d8d8d8" stroke="#aaa" stroke-width="1"/></g><g transform="translate(2169.5,279)"><path d="M-8 8L2 -3" stroke="#1a2a6a" stroke-width="3"/><path d="M-2 -6L3 -9L8 -5L4 -1Z" fill="#333"/><path d="M9 7V10H6Z" fill="#222"/></g><g transform="translate(2195,279)"><circle r="8.5" fill="url(#rbs)"/><text x="0" y="5" font-family="Liberation Serif" font-weight="bold" font-size="14" fill="#fff" text-anchor="middle">?</text></g><path d="M2189 334L2195 340L2205 329" fill="none" stroke="#1e2430" stroke-width="2"/><rect x="2249.5" y="328" width="14" height="13" fill="#000" stroke="#c8d4f0" stroke-width="1"/><circle cx="2278" cy="334" r="8.5" fill="#fff"/><path d="M2216.5 363V360Q2211 356 2212 353A4.8 4.8 0 0 1 2221.5 353Q2222 356 2217 360V363Z" fill="#f5e070" stroke="#9a7a20" stroke-width="1"/><rect x="2230.5" y="354" width="10" height="9" rx="1.5" fill="#f0d040" stroke="#7a6020" stroke-width="1"/><path d="M2237 354V351A3.5 3.5 0 0 1 2244 351V353" fill="none" stroke="#444" stroke-width="1.3"/><circle cx="2278" cy="356" r="8" fill="#f5f7f7"/><path d="M2216.5 385V382Q2211 378 2212 375A4.8 4.8 0 0 1 2221.5 375Q2222 378 2217 382V385Z" fill="#f5e070" stroke="#9a7a20" stroke-width="1"/><rect x="2230.5" y="376" width="10" height="9" rx="1.5" fill="#f0d040" stroke="#7a6020" stroke-width="1"/><path d="M2237 376V373A3.5 3.5 0 0 1 2244 373V375" fill="none" stroke="#444" stroke-width="1.3"/><circle cx="2278" cy="378" r="8" fill="#f5f7f7"/><path d="M2216.5 407V404Q2211 400 2212 397A4.8 4.8 0 0 1 2221.5 397Q2222 400 2217 404V407Z" fill="#f5e070" stroke="#9a7a20" stroke-width="1"/><rect x="2230.5" y="398" width="10" height="9" rx="1.5" fill="#f0d040" stroke="#7a6020" stroke-width="1"/><path d="M2237 398V395A3.5 3.5 0 0 1 2244 395V397" fill="none" stroke="#444" stroke-width="1.3"/><circle cx="2278" cy="400" r="8" fill="#f5f7f7"/><rect x="2249" y="349" width="15" height="15" fill="#000"/><rect x="2249" y="371" width="15" height="15" fill="#555"/><rect x="2250" y="372" width="6" height="6" fill="#bbb"/><rect x="2257" y="379" width="6" height="6" fill="#bbb"/><rect x="2249" y="393" width="15" height="15" fill="#000"/><path d="M1954 353L1958.5 357.5L1963 353" fill="none" stroke="#333" stroke-width="1.6"/><path d="M1975 373L1980 377.5L1975 382" fill="none" stroke="#777" stroke-width="1.2"/><path d="M1975 395L1980 399.5L1975 404" fill="none" stroke="#777" stroke-width="1.2"/><path d="M1958 655L1955 659L1958 663" fill="none" stroke="#444" stroke-width="1.3"/><path d="M2298 655L2301 659L2298 663" fill="none" stroke="#444" stroke-width="1.3"/></svg><div class="a" style="left:1946px;top:669px;width:358px;height:1px;background:#d8dde2"></div><div class="a" style="left:1946px;top:678px;width:358px;height:1px;background:#dfe4e8"></div><svg class="a" style="left:1940px;top:680px" width="364" height="60" viewBox="1940 680 364 60"><path d="M1946 708V688Q1946 684 1950 684H2003L2027 708H2304" fill="none" stroke="#d5dbe0" stroke-width="1"/><path d="M1955 706L1955 694Q1955 690 1959 690L1966 689L1966 694L1961 697L1965 703L1961 707Z" fill="#333"/><path d="M1957 692L1968 689L1967 695Z" fill="#333"/></svg><svg class="a" style="left:2290px;top:690px" width="14" height="16" viewBox="2290 690 14 16"><circle cx="2303" cy="698" r="6" fill="none" stroke="#c8ccd8" stroke-width="1.5"/></svg><span class="a" style="left:1972px;top:689px;font-size:14.5px;color:#4a4a4a">Finch</span><div class="a" style="left:1946px;top:731px;width:358px;height:425px;background:#fff;border-left:1px solid #b8bcc0;border-bottom:2px solid #b8bcc0"></div><div class="a" style="left:1946px;top:730px;width:358px;height:1px;background:#c0c4c8"></div><div class="a" style="left:1946px;top:711px;width:59px;height:22px;background:#fff;border:1px solid #c0c4c8;border-bottom:none"></div><div class="a" style="left:2005px;top:713px;width:70px;height:18px;background:#eceeef;border:1px solid #c0c4c8;border-bottom:none"></div><div class="a" style="left:2075px;top:713px;width:62px;height:18px;background:#eceeef;border:1px solid #c0c4c8;border-bottom:none"></div><div class="a" style="left:2137px;top:713px;width:49px;height:18px;background:#eceeef;border:1px solid #c0c4c8;border-bottom:none"></div><span class="a" style="left:1956px;top:713px;font-size:13px;color:#222">Project</span><span class="a" style="left:2011px;top:715px;font-size:13px;color:#222">Advanced</span><span class="a" style="left:2083px;top:715px;font-size:13px;color:#222">Account</span><span class="a" style="left:2145px;top:715px;font-size:13px;color:#222">About</span><span class="a" style="left:1962px;top:762px;font-size:14px;color:#444">Project</span><div class="a" style="left:1961px;top:785px;width:337px;height:27px;border:1.5px solid #c0c2c4;background:#fff"></div><span class="a" style="left:1968px;top:791px;font-size:14px;color:#333">The Pike</span><span class="a" style="left:1962px;top:826px;font-size:14px;color:#444">Variant</span><div class="a" style="left:1961px;top:849px;width:337px;height:26px;border:1.5px solid #c0c2c4;background:#fff"></div><span class="a" style="left:1968px;top:855px;font-size:14px;color:#333">Variant 1</span><svg class="a" style="left:2280px;top:790px" width="14" height="80" viewBox="2280 790 14 80"><path d="M2282.5 794.5L2286 798.5L2289.5 794.5M2282.5 858.5L2286 862.5L2289.5 858.5" fill="none" stroke="#222" stroke-width="2.4"/></svg><span class="a" style="left:1962px;top:890px;font-size:14px;color:#444;letter-spacing:0.15px">There are changes to sync</span><div class="a" style="left:1961px;top:934px;width:337px;height:29px;background:#3d56f0"></div><span class="a" style="left:2116px;top:942px;font-size:14px;color:#e8ecff">Sync</span>
<svg class="a" style="left:60px;top:1134px" width="110" height="30" viewBox="60 1134 110 30"><path d="M66.5 1134V1150L75 1159.5H156.5V1134" fill="#e8ecee" stroke="#d3d9df" stroke-width="1"/></svg><span class="a" style="left:78px;top:1140px;font-size:14px;color:#444">Perspective</span><span class="a" style="left:170px;top:1140px;font-size:14px;color:#444">Top</span><span class="a" style="left:213px;top:1140px;font-size:14px;color:#444;letter-spacing:0.3px">Front</span><span class="a" style="left:267px;top:1140px;font-size:14px;color:#444;letter-spacing:0.3px">Right</span><svg class="a" style="left:318px;top:1140px" width="16" height="16" viewBox="0 0 16 16"><path d="M6 2H10V6H14V10H10V14H6V10H2V6H6Z" fill="none" stroke="#c8ccd0" stroke-width="1"/></svg><span class="a" style="left:23.4px;top:1170px;font-size:14px;color:#444;letter-spacing:-0.6px">End</span><span class="a" style="left:75px;top:1170px;font-size:14px;color:#444;letter-spacing:0px">Near</span><span class="a" style="left:133.5px;top:1170px;font-size:14px;color:#444;letter-spacing:0px">Point</span><span class="a" style="left:195px;top:1170px;font-size:14px;color:#444;letter-spacing:0.4px">Mid</span><span class="a" style="left:248px;top:1170px;font-size:14px;color:#444;letter-spacing:-0.4px">Cen</span><span class="a" style="left:301px;top:1170px;font-size:14px;color:#444;letter-spacing:0px">Int</span><span class="a" style="left:346.5px;top:1170px;font-size:14px;color:#444;letter-spacing:-0.5px">Perp</span><span class="a" style="left:403.6px;top:1170px;font-size:14px;color:#444;letter-spacing:-0.6px">Tan</span><span class="a" style="left:454.4px;top:1170px;font-size:14px;color:#444;letter-spacing:0px">Quad</span><span class="a" style="left:517.3px;top:1170px;font-size:14px;color:#444;letter-spacing:0.2px">Knot</span><span class="a" style="left:576px;top:1170px;font-size:14px;color:#444;letter-spacing:0px">Vertex</span><span class="a" style="left:644px;top:1170px;font-size:14px;color:#444">Project</span><span class="a" style="left:727.5px;top:1170px;font-size:14px;color:#444">Disable</span><svg class="a" style="left:0;top:1160px" width="800" height="30" viewBox="0 1160 800 30"><rect x="4.0" y="1169.5" width="15" height="15" fill="#fff" stroke="#3a3a3a" stroke-width="1.2"/><path d="M6.5 1176.5L10.0 1180.5L16.5 1172.5" fill="none" stroke="#555" stroke-width="1.1"/><rect x="55.5" y="1169.5" width="15" height="15" fill="#fff" stroke="#3a3a3a" stroke-width="1.2"/><path d="M58 1176.5L61.5 1180.5L68 1172.5" fill="none" stroke="#555" stroke-width="1.1"/><rect x="114.5" y="1169.5" width="15" height="15" fill="#fff" stroke="#3a3a3a" stroke-width="1.2"/><path d="M117 1176.5L120.5 1180.5L127 1172.5" fill="none" stroke="#555" stroke-width="1.1"/><rect x="175.5" y="1169.5" width="15" height="15" fill="#fff" stroke="#3a3a3a" stroke-width="1.2"/><path d="M178 1176.5L181.5 1180.5L188 1172.5" fill="none" stroke="#555" stroke-width="1.1"/><rect x="228.5" y="1169.5" width="15" height="15" fill="#fff" stroke="#3a3a3a" stroke-width="1.2"/><rect x="282.0" y="1169.5" width="15" height="15" fill="#fff" stroke="#3a3a3a" stroke-width="1.2"/><path d="M284.5 1176.5L288.0 1180.5L294.5 1172.5" fill="none" stroke="#555" stroke-width="1.1"/><rect x="327.2" y="1169.5" width="15" height="15" fill="#fff" stroke="#3a3a3a" stroke-width="1.2"/><path d="M329.7 1176.5L333.2 1180.5L339.7 1172.5" fill="none" stroke="#555" stroke-width="1.1"/><rect x="384.1" y="1169.5" width="15" height="15" fill="#fff" stroke="#3a3a3a" stroke-width="1.2"/><rect x="435.8" y="1169.5" width="15" height="15" fill="#fff" stroke="#3a3a3a" stroke-width="1.2"/><rect x="498.4" y="1169.5" width="15" height="15" fill="#fff" stroke="#3a3a3a" stroke-width="1.2"/><rect x="556.1" y="1169.5" width="15" height="15" fill="#fff" stroke="#3a3a3a" stroke-width="1.2"/><rect x="625.5" y="1170" width="14" height="14" fill="#e4e6e8" stroke="#d0d2d4" stroke-width="1"/><rect x="708.7" y="1170" width="14" height="14" fill="#e4e6e8" stroke="#d0d2d4" stroke-width="1"/></svg><div class="a" style="left:0;top:1188px;width:2304px;height:1px;background:#d5dbe0"></div><div class="a" style="left:727px;top:1189px;width:305px;height:13px;background:#d3dcee"></div><div class="a" style="left:47px;top:1189px;width:1px;height:13px;background:#d5dbe0"></div><div class="a" style="left:148px;top:1189px;width:1px;height:13px;background:#d5dbe0"></div><div class="a" style="left:251px;top:1189px;width:1px;height:13px;background:#d5dbe0"></div><div class="a" style="left:352px;top:1189px;width:1px;height:13px;background:#d5dbe0"></div><div class="a" style="left:448px;top:1189px;width:1px;height:13px;background:#d5dbe0"></div><div class="a" style="left:652px;top:1189px;width:1px;height:13px;background:#d5dbe0"></div><div class="a" style="left:1137px;top:1189px;width:1px;height:13px;background:#d5dbe0"></div><div class="a" style="left:1182px;top:1189px;width:1px;height:13px;background:#d5dbe0"></div><span class="a" style="left:-1px;top:1190px;font-size:14px;letter-spacing:-0.8px;font-weight:normal;color:#444">CPlane</span><span class="a" style="left:57px;top:1190px;font-size:14px;letter-spacing:0px;font-weight:normal;color:#444">x -17848.436</span><span class="a" style="left:158px;top:1190px;font-size:14px;letter-spacing:0.2px;font-weight:normal;color:#444">y -31331.878</span><span class="a" style="left:280px;top:1190px;font-size:14px;letter-spacing:-0.5px;font-weight:normal;color:#444">z 0.000</span><span class="a" style="left:368px;top:1190px;font-size:14px;letter-spacing:0.35px;font-weight:normal;color:#444">Millimeters</span><span class="a" style="left:473px;top:1190px;font-size:14px;letter-spacing:0.4px;font-weight:normal;color:#444">Default</span><span class="a" style="left:659px;top:1190px;font-size:14px;letter-spacing:0px;font-weight:normal;color:#444">Grid Snap</span><span class="a" style="left:733px;top:1190px;font-size:14px;letter-spacing:0px;font-weight:bold;color:#1e2a44">Ortho</span><span class="a" style="left:782px;top:1190px;font-size:14px;letter-spacing:0px;font-weight:bold;color:#1e2a44">Planar</span><span class="a" style="left:834px;top:1190px;font-size:14px;letter-spacing:0px;font-weight:bold;color:#1e2a44">Osnap</span><span class="a" style="left:886px;top:1190px;font-size:14px;letter-spacing:-0.6px;font-weight:bold;color:#1e2a44">SmartTrack</span><span class="a" style="left:969px;top:1190px;font-size:14px;letter-spacing:0.2px;font-weight:bold;color:#1e2a44">Gumball</span><span class="a" style="left:1038px;top:1190px;font-size:14px;letter-spacing:0px;font-weight:normal;color:#444">Record History</span><span class="a" style="left:1145px;top:1190px;font-size:14px;letter-spacing:0.3px;font-weight:normal;color:#444">Filter</span><span class="a" style="left:1183px;top:1190px;font-size:14px;letter-spacing:0.2px;font-weight:normal;color:#444">Minutes from last save: 1</span><div class="a" style="left:458px;top:1191px;width:10px;height:11px;background:#000"></div>
</div></body></html>
